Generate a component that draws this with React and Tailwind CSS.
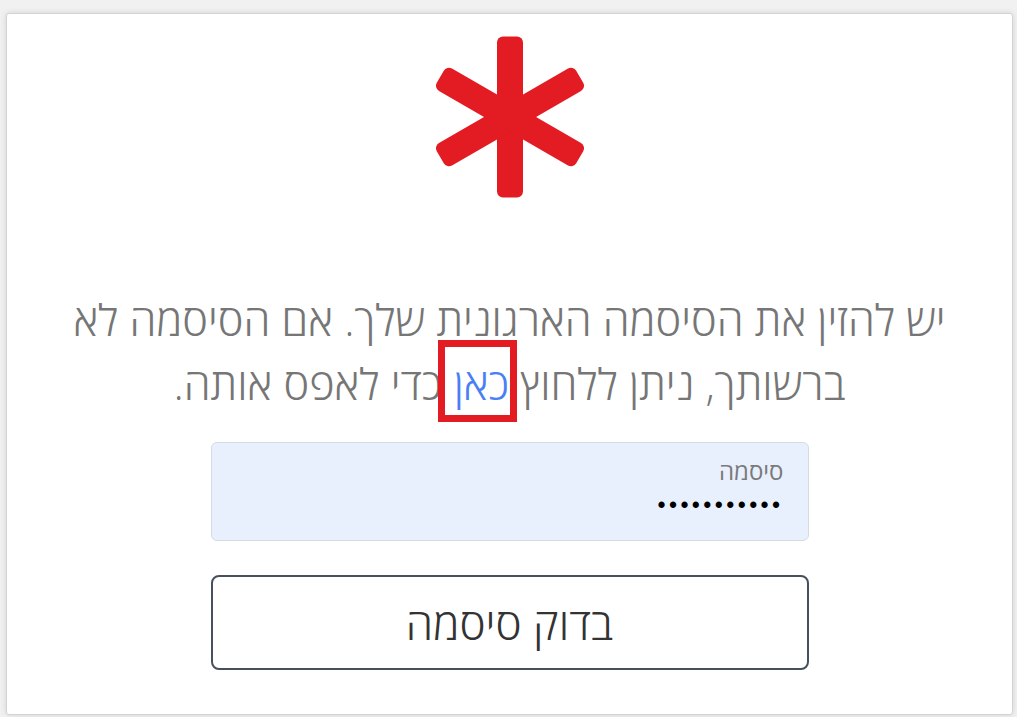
import React from 'react';

// Six-spoke asterisk mark drawn as three rotated rounded bars
const AsteriskMark = () => (
  <svg width="170" height="170" viewBox="0 0 170 170" className="block">
    {[0, 60, 120].map((deg) => (
      <rect
        key={deg}
        x="72"
        y="4.5"
        width="26"
        height="161"
        rx="6"
        fill="#e31b23"
        transform={`rotate(${deg} 85 85)`}
      />
    ))}
  </svg>
);

const App = () => {
  return (
    <div className="min-h-screen bg-[#f1f1f1] pt-[13px] pl-[6px] pr-[4px] pb-[2px] font-['Open_Sans','Liberation_Sans',sans-serif]">
      <div
        dir="rtl"
        className="h-[702px] bg-white border border-[#d3d3d3] rounded-[3px] shadow-[0_0_6px_rgba(0,0,0,0.12)] flex flex-col items-center"
      >
        <div className="mt-[18px]">
          <AsteriskMark />
        </div>

        <p className="mt-[86px] text-center text-[43.3px] leading-[64px] text-[#767676] font-light whitespace-nowrap">
          יש להזין את הסיסמה הארגונית שלך. אם הסיסמה לא
          <br />
          ברשותך, ניתן ללחוץ{' '}
          <span className="relative inline-block">
            <a href="#" className="text-[#4a7ef5]">כאן</a>
            <span className="absolute -top-[12px] -bottom-[6px] -left-[16px] -right-[8px] border-[7px] border-[#e31b23] pointer-events-none" />
          </span>{' '}
          כדי לאפס אותה.
        </p>

        <div className="mt-[26px] w-[598px] h-[99px] bg-[#e8f0fe] border border-[#d5dbe3] rounded-[6px] px-[24px] pt-[12px] flex flex-col items-start">
          <span className="text-[24px] leading-[32px] text-[#7a7a7a]">סיסמה</span>
          <span dir="ltr" className="mt-[6px] self-start text-[23px] leading-[24px] tracking-[3.4px] text-black font-['Liberation_Sans',sans-serif]">
            •••••••••••
          </span>
        </div>

        <button className="mt-[34px] w-[598px] h-[95px] bg-white border-2 border-[#46515d] rounded-[8px] text-[44px] text-[#333] font-light">
          בדוק סיסמה
        </button>
      </div>
    </div>
  );
};

export default App;
